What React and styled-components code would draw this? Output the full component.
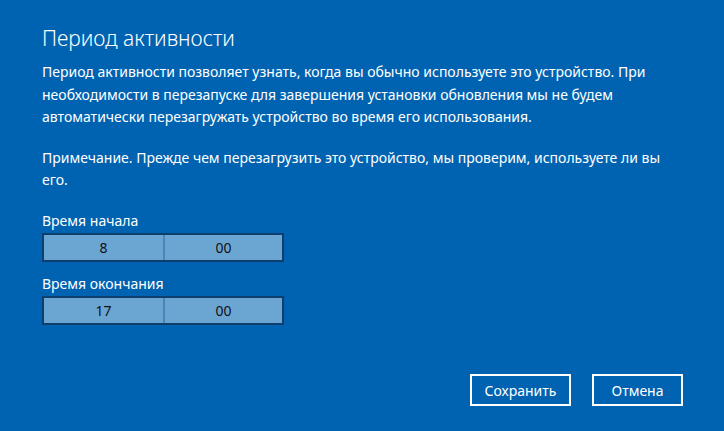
import React from "react"
import styled, { createGlobalStyle } from "styled-components"

const Global = createGlobalStyle`
    html, body {
        margin: 0;
        padding: 0;
        background: #0063b1;
    }
    body {
        font-family: "Noto Sans", "Open Sans", sans-serif;
        color: #ffffff;
    }
`

const Page = styled.div`
    width: 724px;
    height: 431px;
    box-sizing: border-box;
    padding: 22px 42px 0 42px;
    display: flex;
    flex-direction: column;
    background: #0063b1;
`

const Title = styled.h1`
    margin: 0 0 7px 0;
    font-size: 21px;
    font-weight: 300;
    line-height: 32px;
`

const Paragraph = styled.p`
    margin: 0 0 ${props => props.last ? "19px" : "18px"} 0;
    font-size: 14px;
    line-height: 22.5px;
    max-width: 640px;
`

const Label = styled.div`
    font-size: 14px;
    line-height: 20px;
    margin-top: ${props => props.first ? "0" : "12px"};
    margin-bottom: 2px;
`

const TimeField = styled.div`
    width: 242px;
    height: 29px;
    box-sizing: border-box;
    border: 2px solid #0d3e6c;
    background: #6ba6d3;
    display: grid;
    grid-template-columns: 1fr 1fr;
`

const TimePart = styled.div`
    display: flex;
    align-items: center;
    justify-content: center;
    color: #111111;
    font-size: 14px;
    & + & {
        border-left: 2px solid #4d84b4;
    }
`

const Actions = styled.div`
    margin-top: auto;
    margin-bottom: 25px;
    margin-right: -1px;
    display: flex;
    justify-content: flex-end;
    gap: 21px;
`

const Button = styled.button`
    width: ${props => props.wide ? "101px" : "91px"};
    height: 32px;
    box-sizing: border-box;
    background: transparent;
    border: 2px solid #ffffff;
    color: #ffffff;
    font-family: inherit;
    font-size: 14px;
    padding: 0;
`

const times = [
    { label: "Время начала", hours: "8", minutes: "00" },
    { label: "Время окончания", hours: "17", minutes: "00" }
]

const App = () =>
    <Page>
        <Global />
        <Title>Период активности</Title>
        <Paragraph>
            Период активности позволяет узнать, когда вы обычно используете это устройство. При необходимости в перезапуске для завершения установки обновления мы не будем автоматически перезагружать устройство во время его использования.
        </Paragraph>
        <Paragraph last>
            Примечание. Прежде чем перезагрузить это устройство, мы проверим, используете ли вы его.
        </Paragraph>
        {times.map((t, i) =>
            <div key={t.label}>
                <Label first={i === 0}>{t.label}</Label>
                <TimeField>
                    <TimePart>{t.hours}</TimePart>
                    <TimePart>{t.minutes}</TimePart>
                </TimeField>
            </div>
        )}
        <Actions>
            <Button wide>Сохранить</Button>
            <Button>Отмена</Button>
        </Actions>
    </Page>

export default App
